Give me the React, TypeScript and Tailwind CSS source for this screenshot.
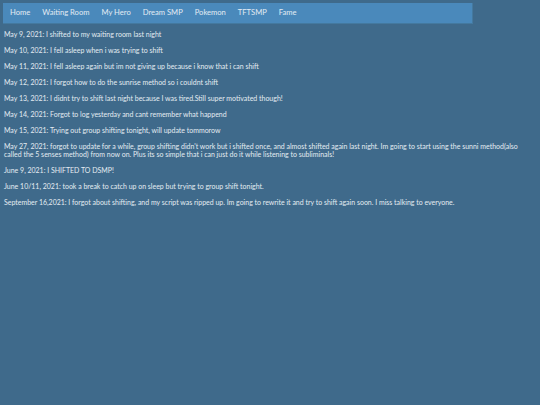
const navItems = ['Home', 'Waiting Room', 'My Hero', 'Dream SMP', 'Pokemon', 'TFTSMP', 'Fame'];

const entries = [
  'May 9, 2021: I shifted to my waiting room last night',
  'May 10, 2021: I fell asleep when i was trying to shift',
  'May 11, 2021: I fell asleep again but im not giving up because i know that i can shift',
  'May 12, 2021: I forgot how to do the sunrise method so i couldnt shift',
  'May 13, 2021: I didnt try to shift last night because I was tired.Still super motivated though!',
  'May 14, 2021: Forgot to log yesterday and cant remember what happend',
  'May 15, 2021: Trying out group shifting tonight, will update tommorow',
  "May 27, 2021: forgot to update for a while, group shifting didn't work but i shifted once, and almost shifted again last night. Im going to start using the sunni method(also called the 5 senses method) from now on. Plus its so simple that i can just do it while listening to subliminals!",
  'June 9, 2021: I SHIFTED TO DSMP!',
  'June 10/11, 2021: took a break to catch up on sleep but trying to group shift tonight.',
  'September 16,2021: I forgot about shifting, and my script was ripped up. Im going to rewrite it and try to shift again soon. I miss talking to everyone.',
];

export default function App() {
  return (
    <div className="min-h-[405px] w-[540px] bg-[#3f6a8b] pl-[3px] pt-[3px] text-[#e4ecf2] font-['Lato',sans-serif]">
      {/* Nav bar */}
      <nav className="flex h-[21px] w-[470px] items-center border-b border-r border-[#44799f] bg-[#4a89bb] px-[1px]">
        {navItems.map((item) => (
          <a key={item} className="px-[6px] text-[7.6px] leading-none text-[#e2ebf3]">
            {item}
          </a>
        ))}
      </nav>

      {/* Log entries */}
      <div className="mt-[6px] flex flex-col gap-[8px] pl-[1px] pr-[8px] text-[6.97px] leading-[8px]">
        {entries.map((entry) => (
          <p key={entry}>{entry}</p>
        ))}
      </div>
    </div>
  );
}
